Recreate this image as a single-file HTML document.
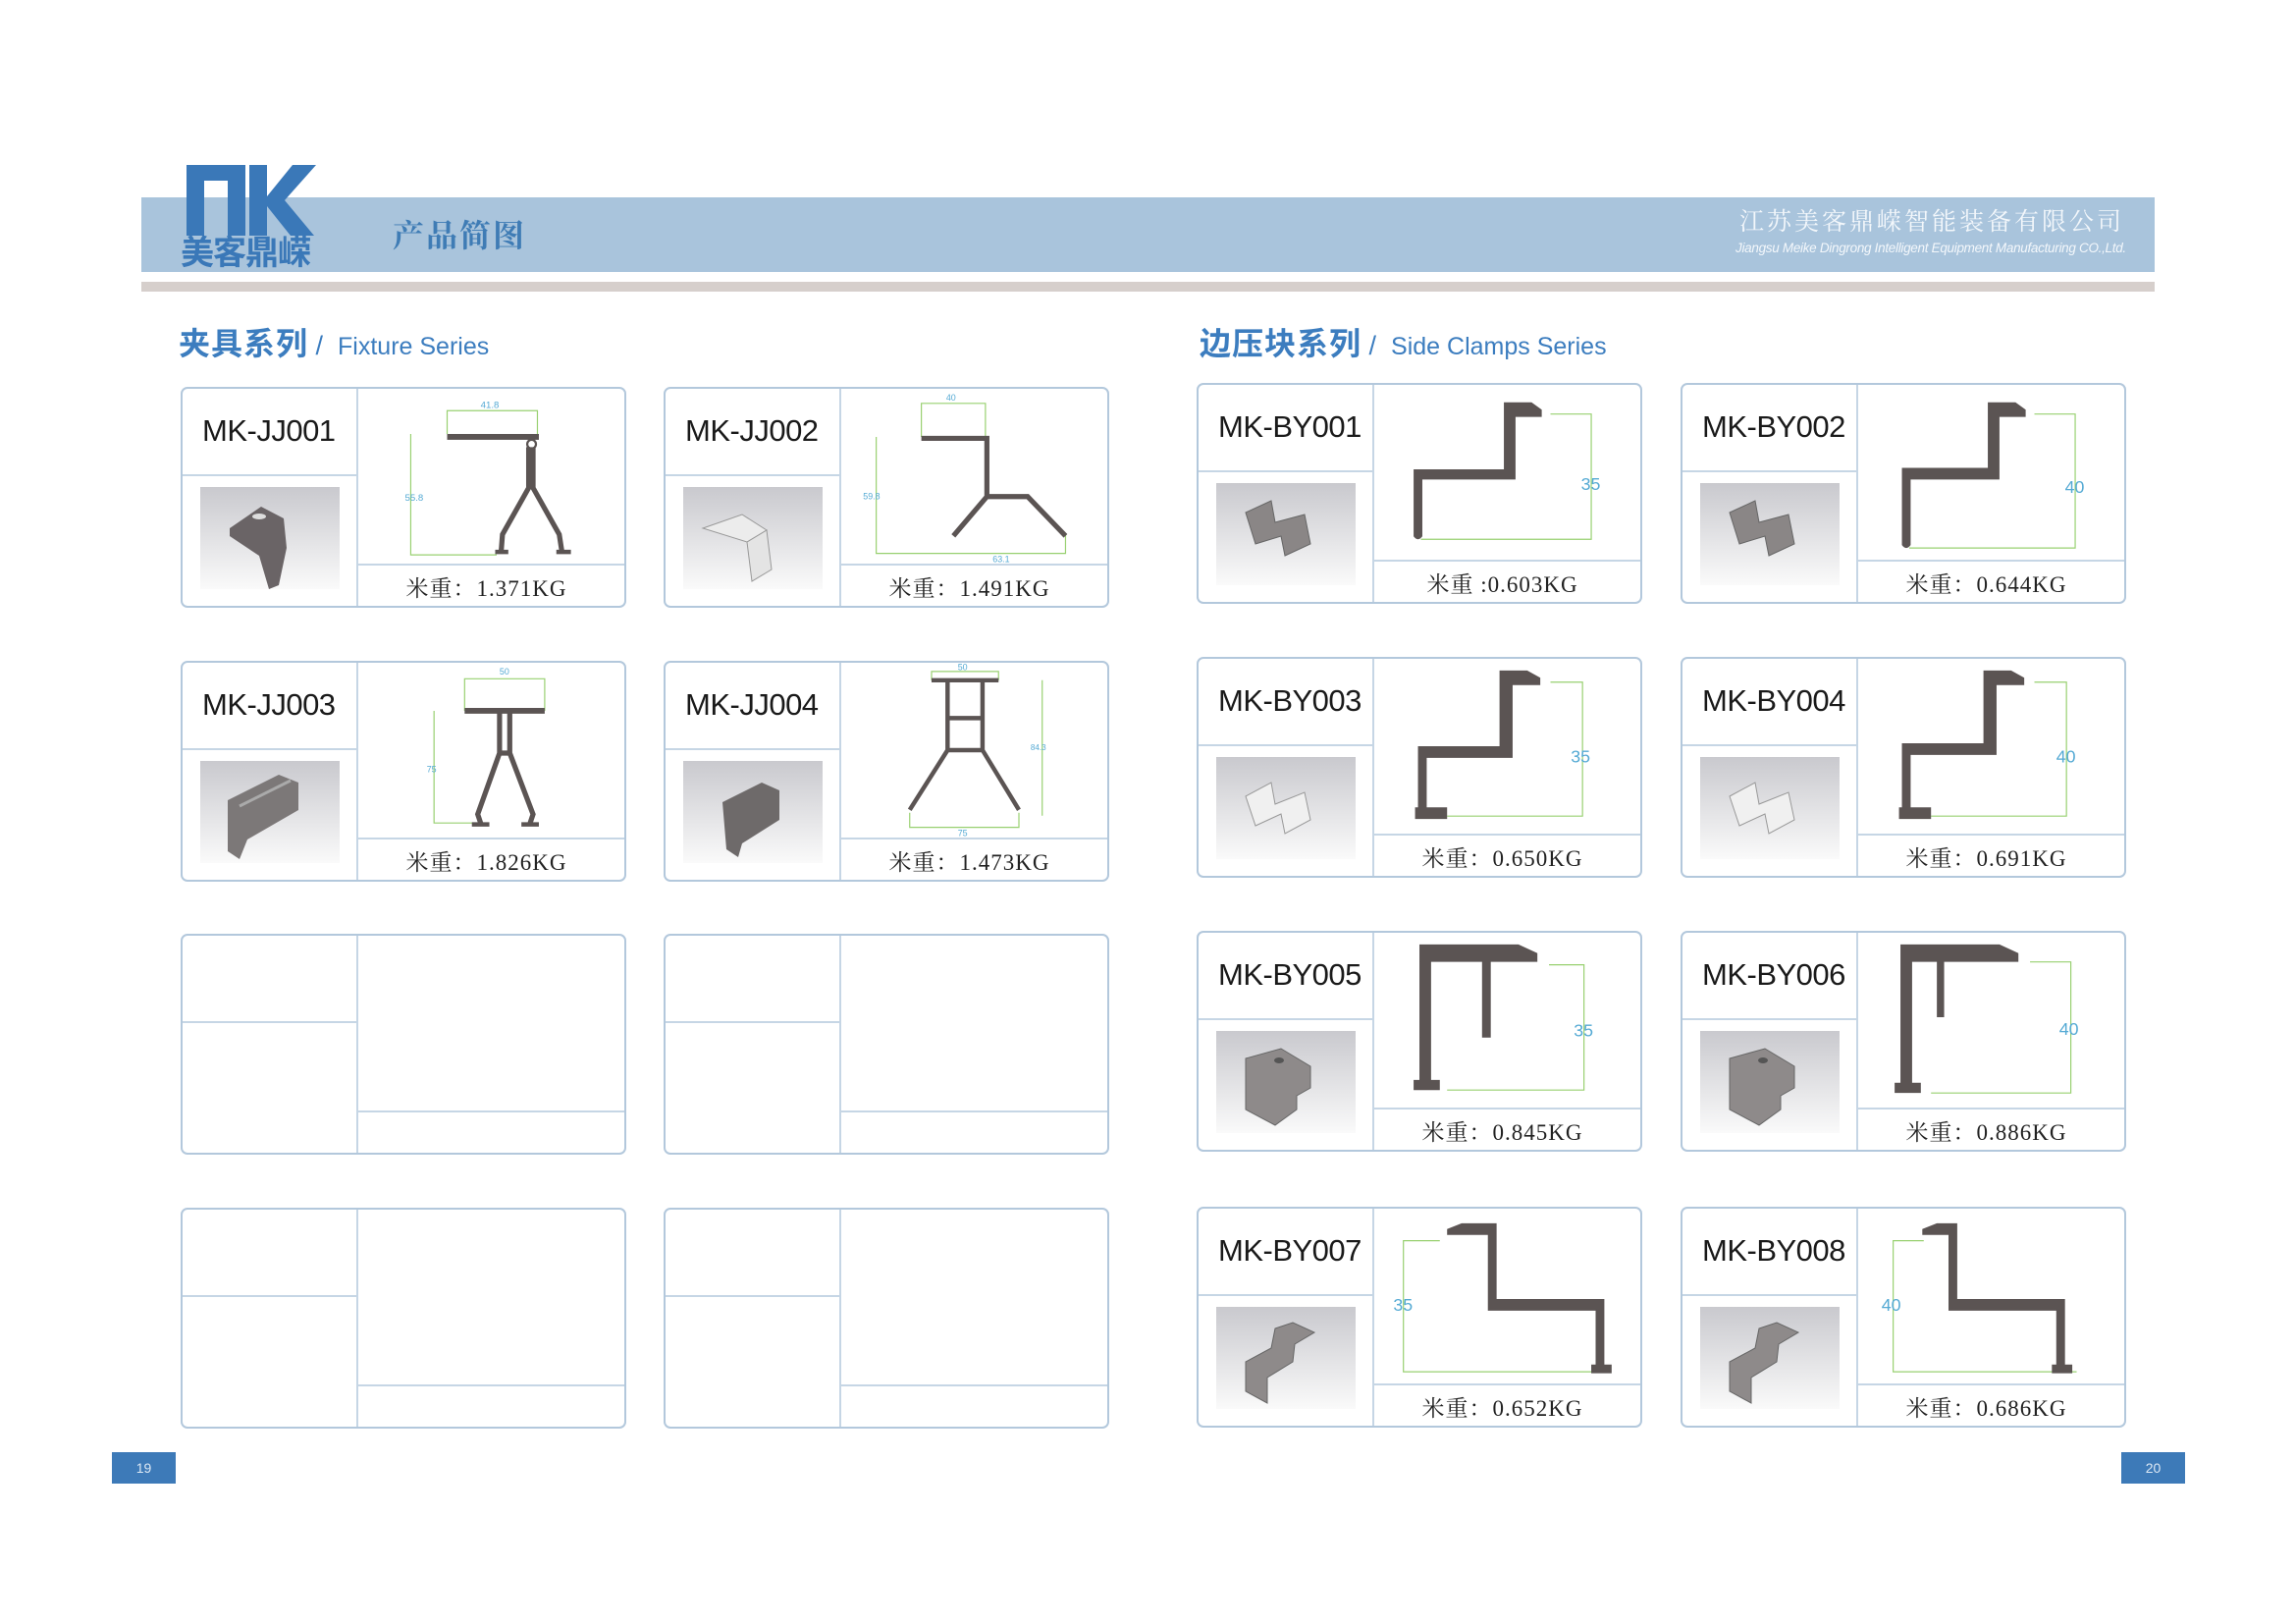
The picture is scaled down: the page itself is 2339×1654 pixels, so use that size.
<!DOCTYPE html>
<html><head><meta charset="utf-8"><style>
*{margin:0;padding:0;box-sizing:border-box}
body{width:2339px;height:1654px;background:#fff;position:relative;overflow:hidden;font-family:"Liberation Sans","Noto Sans CJK SC",sans-serif}
.abs{position:absolute}
.card{position:absolute;width:454px;height:225px;border:2px solid #b3c8dc;border-radius:7px;background:#fff}
.vl{position:absolute;left:177px;top:0;bottom:0;width:2px;background:#c6d6e5}
.hl{position:absolute;left:0;width:178px;top:87px;height:2px;background:#c6d6e5}
.hr{position:absolute;left:178px;right:0;top:178px;height:2px;background:#c6d6e5}
.name{position:absolute;left:20px;top:25px;font-size:31px;color:#1a1a1a;letter-spacing:-0.5px}
.img{position:absolute;left:18px;top:100px;width:142px;height:104px}
.dr{position:absolute;left:179px;top:0;width:273px;height:178px}
.wt{position:absolute;left:179px;right:0;top:180px;bottom:0;display:flex;align-items:center;justify-content:center;font-family:"Liberation Serif","Noto Serif CJK SC",serif;font-size:23px;color:#222;padding-top:2px;letter-spacing:1px;padding-right:10px}
.pf{fill:#5b5453}
.dm{stroke:#98d070;stroke-width:0.8;fill:none}
.lb{fill:#55aad4;font-family:"Liberation Sans",sans-serif}
</style></head><body>
<svg width="0" height="0" style="position:absolute"><defs>
<linearGradient id="g" x1="0" y1="0" x2="0" y2="1"><stop offset="0" stop-color="#c9c9ce"/><stop offset="1" stop-color="#fafafa"/></linearGradient>
</defs></svg>

<!-- header -->
<div class="abs" style="left:144px;top:201px;width:2063px;height:76px;background:#a9c4dc;width:2051px"></div>
<div class="abs" style="left:144px;top:287px;width:2051px;height:10px;background:#d6cfcc"></div>
<svg class="abs" style="left:188px;top:166px" width="136" height="76" viewBox="0 0 136 76">
<path d="M2 2 H62 V74 H44 V18 H20 V74 H2 Z" fill="#3a78b8"/>
<path d="M66 2 H84 V34 L110 2 H134 L102 38 L132 74 H108 L84 44 V74 H66 Z" fill="#3a78b8"/>
</svg>
<div class="abs" style="left:184px;top:238px;font-size:34px;font-weight:bold;color:#3a78b8;letter-spacing:-1px;line-height:40px">美客鼎嵘</div>
<div class="abs" style="left:400px;top:218px;font-size:32px;font-family:'Liberation Serif','Noto Serif CJK SC',serif;font-weight:bold;color:#3f7cb5;line-height:44px;letter-spacing:2px">产品简图</div>
<div class="abs" style="left:1772px;top:210px;font-size:25px;font-family:'Liberation Serif','Noto Serif CJK SC',serif;color:#f3f7fb;letter-spacing:3px;line-height:34px">江苏美客鼎嵘智能装备有限公司</div>
<div class="abs" style="left:1768px;top:245px;width:410px;font-size:13.5px;font-style:italic;color:#f3f7fb;line-height:16px;white-space:nowrap;letter-spacing:-0.3px">Jiangsu Meike Dingrong Intelligent Equipment Manufacturing CO.,Ltd.</div>

<!-- headings -->
<div class="abs" style="left:182px;top:330px;font-size:32px;font-weight:bold;color:#3c7dbf;line-height:40px;letter-spacing:1px">夹具系列<span style="font-weight:normal;font-size:27px;letter-spacing:0"> /&nbsp; </span><span style="font-weight:normal;font-size:25px;letter-spacing:0">Fixture Series</span></div>
<div class="abs" style="left:1222px;top:330px;font-size:32px;font-weight:bold;color:#3c7dbf;line-height:40px;letter-spacing:1px">边压块系列<span style="font-weight:normal;font-size:27px;letter-spacing:0"> /&nbsp; </span><span style="font-weight:normal;font-size:25px;letter-spacing:0">Side Clamps Series</span></div>

<!-- JJ001 -->
<div class="card" style="left:184px;top:394px"><div class="vl"></div><div class="hl"></div><div class="hr"></div>
<div class="name">MK-JJ001</div>
<svg class="img" viewBox="0 0 142 104"><rect width="142" height="104" fill="url(#g)"/><path d="M30 42 L62 20 L85 32 L88 62 L80 100 L70 104 L60 70 L30 50Z" fill="#6a6466"/><ellipse cx="60" cy="30" rx="7" ry="3" fill="#ddd"/></svg>
<svg class="dr" viewBox="0 0 184 120">
<path class="dm" d="M36 31 V114 H95 M61 31 V15 H123 V31"/>
<text class="lb" x="32" y="77" font-size="6.5">55.8</text><text class="lb" x="84" y="13" font-size="6.5">41.8</text>
<rect class="pf" x="61" y="31" width="63" height="4"/>
<circle cx="119" cy="38" r="3" fill="none" stroke="#5b5453" stroke-width="1.5"/>
<path d="M117 40 V68 L99 100 L98 113 M120 40 V68 L138 100 L140 113" stroke="#5b5453" stroke-width="3.5" fill="none"/>
<path d="M94 112 H103 M136 112 H146" stroke="#5b5453" stroke-width="3"/>
</svg><div class="wt">米重：1.371KG</div></div>

<!-- JJ002 -->
<div class="card" style="left:676px;top:394px"><div class="vl"></div><div class="hl"></div><div class="hr"></div>
<div class="name">MK-JJ002</div>
<svg class="img" viewBox="0 0 142 104"><rect width="142" height="104" fill="url(#g)"/><path d="M20 42 L60 28 L85 44 L65 56Z" fill="#ececec" stroke="#999"/><path d="M65 56 L85 44 L90 84 L70 96Z" fill="#e4e4e4" stroke="#999"/></svg>
<svg class="dr" viewBox="0 0 184 120">
<path class="dm" d="M24 33 V113 H154 V100 M55 33 V10 H99 V33"/>
<text class="lb" x="15" y="76" font-size="6">59.8</text><text class="lb" x="72" y="8" font-size="6">40</text><text class="lb" x="104" y="119" font-size="6">63.1</text>
<path d="M55 34 H100 V74 L77 101 M100 74 H128 L154 101" stroke="#5b5453" stroke-width="3.5" fill="none"/>
</svg><div class="wt">米重：1.491KG</div></div>

<!-- JJ003 -->
<div class="card" style="left:184px;top:673px"><div class="vl"></div><div class="hl"></div><div class="hr"></div>
<div class="name">MK-JJ003</div>
<svg class="img" viewBox="0 0 142 104"><rect width="142" height="104" fill="url(#g)"/><path d="M28 40 L80 14 L100 22 L100 50 L48 80 L40 100 L28 92Z" fill="#7c7878"/><path d="M40 46 L92 20" stroke="#aaa" stroke-width="3"/></svg>
<svg class="dr" viewBox="0 0 184 120">
<path class="dm" d="M52 33 V110 H88 M73 33 V11 H128 V33"/>
<text class="lb" x="47" y="75" font-size="6">75</text><text class="lb" x="97" y="8" font-size="6">50</text>
<path d="M73 33 H128" stroke="#5b5453" stroke-width="4"/>
<path d="M97 33 V62 L82 104 L84 110 M104 33 V62 L120 104 L118 110 M97 62 L104 62" stroke="#5b5453" stroke-width="3.5" fill="none"/>
<path d="M78 111 H90 M112 111 H124" stroke="#5b5453" stroke-width="3"/>
</svg><div class="wt">米重：1.826KG</div></div>

<!-- JJ004 -->
<div class="card" style="left:676px;top:673px"><div class="vl"></div><div class="hl"></div><div class="hr"></div>
<div class="name">MK-JJ004</div>
<svg class="img" viewBox="0 0 142 104"><rect width="142" height="104" fill="url(#g)"/><path d="M40 42 L80 22 L98 30 L98 60 L60 84 L56 98 L44 90Z" fill="#6e6a6a"/></svg>
<svg class="dr" viewBox="0 0 184 120">
<path class="dm" d="M62 12 V6 H108 V12 M138 12 V105 M47 103 V113 H122 V103"/>
<text class="lb" x="80" y="5" font-size="6">50</text><text class="lb" x="130" y="60" font-size="5.5">84.3</text><text class="lb" x="80" y="119" font-size="6">75</text>
<path d="M62 12 H108 M73 12 V60 M97 12 V60 M73 38 H97 M73 60 H97 M73 60 L47 101 M97 60 L122 101" stroke="#5b5453" stroke-width="3" fill="none"/>
</svg><div class="wt">米重：1.473KG</div></div>

<!-- empty cards -->
<div class="card" style="left:184px;top:951px"><div class="vl"></div><div class="hl"></div><div class="hr"></div></div>
<div class="card" style="left:676px;top:951px"><div class="vl"></div><div class="hl"></div><div class="hr"></div></div>
<div class="card" style="left:184px;top:1230px"><div class="vl"></div><div class="hl"></div><div class="hr"></div></div>
<div class="card" style="left:676px;top:1230px"><div class="vl"></div><div class="hl"></div><div class="hr"></div></div>

<!-- BY001 -->
<div class="card" style="left:1219px;top:390px"><div class="vl"></div><div class="hl"></div><div class="hr"></div>
<div class="name">MK-BY001</div>
<svg class="img" viewBox="0 0 142 104"><rect width="142" height="104" fill="url(#g)"/><path d="M30 30 L56 18 L60 40 L90 32 L96 62 L70 74 L66 54 L40 62Z" fill="#8a8686" stroke="#666"/></svg>
<svg class="dr" viewBox="0 0 184 120">
<path class="dm" d="M121 20 H149 V106 H32"/><text class="lb" x="142" y="72" font-size="12">35</text>
<path class="pf" d="M27 58 H89 V12 H108 L115 17 V22 H97 V65 H33 V104 Q30 108 27 104Z"/>
</svg><div class="wt">米重 :0.603KG</div></div>

<!-- BY002 -->
<div class="card" style="left:1712px;top:390px"><div class="vl"></div><div class="hl"></div><div class="hr"></div>
<div class="name">MK-BY002</div>
<svg class="img" viewBox="0 0 142 104"><rect width="142" height="104" fill="url(#g)"/><path d="M30 30 L56 18 L60 40 L90 32 L96 62 L70 74 L66 54 L40 62Z" fill="#8a8686" stroke="#666"/></svg>
<svg class="dr" viewBox="0 0 184 120">
<path class="dm" d="M121 20 H149 V112 H35"/><text class="lb" x="142" y="74" font-size="12">40</text>
<path class="pf" d="M30 57 H89 V12 H108 L115 17 V22 H97 V65 H36 V110 Q33 114 30 110Z"/>
</svg><div class="wt">米重：0.644KG</div></div>

<!-- BY003 -->
<div class="card" style="left:1219px;top:669px"><div class="vl"></div><div class="hl"></div><div class="hr"></div>
<div class="name">MK-BY003</div>
<svg class="img" viewBox="0 0 142 104"><rect width="142" height="104" fill="url(#g)"/><path d="M30 40 L56 26 L60 48 L90 36 L96 64 L70 78 L66 58 L40 70Z" fill="#f0f0f0" stroke="#999"/></svg>
<svg class="dr" viewBox="0 0 184 120">
<path class="dm" d="M121 16 H143 V108 H50"/><text class="lb" x="135" y="71" font-size="12">35</text>
<path class="pf" d="M30 60 H86 V8 H105 L114 13 V18 H95 V68 H36 V102 H50 V110 H28 V102 H30Z"/>
</svg><div class="wt">米重：0.650KG</div></div>

<!-- BY004 -->
<div class="card" style="left:1712px;top:669px"><div class="vl"></div><div class="hl"></div><div class="hr"></div>
<div class="name">MK-BY004</div>
<svg class="img" viewBox="0 0 142 104"><rect width="142" height="104" fill="url(#g)"/><path d="M30 40 L56 26 L60 48 L90 36 L96 64 L70 78 L66 58 L40 70Z" fill="#f0f0f0" stroke="#999"/></svg>
<svg class="dr" viewBox="0 0 184 120">
<path class="dm" d="M121 16 H143 V108 H50"/><text class="lb" x="136" y="71" font-size="12">40</text>
<path class="pf" d="M30 58 H86 V8 H105 L114 13 V18 H95 V66 H36 V102 H50 V110 H28 V102 H30Z"/>
</svg><div class="wt">米重：0.691KG</div></div>

<!-- BY005 -->
<div class="card" style="left:1219px;top:948px"><div class="vl"></div><div class="hl"></div><div class="hr"></div>
<div class="name">MK-BY005</div>
<svg class="img" viewBox="0 0 142 104"><rect width="142" height="104" fill="url(#g)"/><path d="M30 28 L66 18 L96 36 L96 58 L82 66 L82 80 L60 96 L30 80Z" fill="#8e8a8a" stroke="#666"/><ellipse cx="64" cy="30" rx="5" ry="3" fill="#555"/></svg>
<svg class="dr" viewBox="0 0 184 120">
<path class="dm" d="M120 22 H144 V108 H50"/><text class="lb" x="137" y="71" font-size="12">35</text>
<path class="pf" d="M31 8 H99 L112 14 V20 H80 V72 H74 V20 H39 V101 H45 V108 H27 V101 H31Z"/>
</svg><div class="wt">米重：0.845KG</div></div>

<!-- BY006 -->
<div class="card" style="left:1712px;top:948px"><div class="vl"></div><div class="hl"></div><div class="hr"></div>
<div class="name">MK-BY006</div>
<svg class="img" viewBox="0 0 142 104"><rect width="142" height="104" fill="url(#g)"/><path d="M30 28 L66 18 L96 36 L96 58 L82 66 L82 80 L60 96 L30 80Z" fill="#8e8a8a" stroke="#666"/><ellipse cx="64" cy="30" rx="5" ry="3" fill="#555"/></svg>
<svg class="dr" viewBox="0 0 184 120">
<path class="dm" d="M118 20 H146 V110 H50"/><text class="lb" x="138" y="70" font-size="12">40</text>
<path class="pf" d="M29 8 H97 L110 14 V20 H59 V58 H54 V20 H37 V103 H43 V110 H25 V103 H29Z"/>
</svg><div class="wt">米重：0.886KG</div></div>

<!-- BY007 -->
<div class="card" style="left:1219px;top:1229px"><div class="vl"></div><div class="hl"></div><div class="hr"></div>
<div class="name">MK-BY007</div>
<svg class="img" viewBox="0 0 142 104"><rect width="142" height="104" fill="url(#g)"/><path d="M30 56 L56 42 L60 22 L78 16 L100 26 L80 38 L78 56 L52 72 L52 98 L30 86Z" fill="#8e8a8a" stroke="#666"/></svg>
<svg class="dr" viewBox="0 0 184 120">
<path class="dm" d="M45 22 H20 V112 H160"/><text class="lb" x="13" y="70" font-size="12">35</text>
<path class="pf" d="M50 14 L60 10 H84 V62 H158 V107 H163 V113 H149 V107 H152 V70 H78 V18 H50Z"/>
</svg><div class="wt">米重：0.652KG</div></div>

<!-- BY008 -->
<div class="card" style="left:1712px;top:1229px"><div class="vl"></div><div class="hl"></div><div class="hr"></div>
<div class="name">MK-BY008</div>
<svg class="img" viewBox="0 0 142 104"><rect width="142" height="104" fill="url(#g)"/><path d="M30 56 L56 42 L60 22 L78 16 L100 26 L80 38 L78 56 L52 72 L52 98 L30 86Z" fill="#8e8a8a" stroke="#666"/></svg>
<svg class="dr" viewBox="0 0 184 120">
<path class="dm" d="M45 22 H24 V112 H150"/><text class="lb" x="16" y="70" font-size="12">40</text>
<path class="pf" d="M44 14 L54 10 H68 V62 H142 V107 H147 V113 H133 V107 H136 V70 H62 V18 H44Z"/>
</svg><div class="wt">米重：0.686KG</div></div>

<!-- page numbers -->
<div class="abs" style="left:114px;top:1479px;width:65px;height:32px;background:#3d7ab8;color:#dce8f4;font-size:14px;display:flex;align-items:center;justify-content:center">19</div>
<div class="abs" style="left:2161px;top:1479px;width:65px;height:32px;background:#3d7ab8;color:#dce8f4;font-size:14px;display:flex;align-items:center;justify-content:center">20</div>
</body></html>
